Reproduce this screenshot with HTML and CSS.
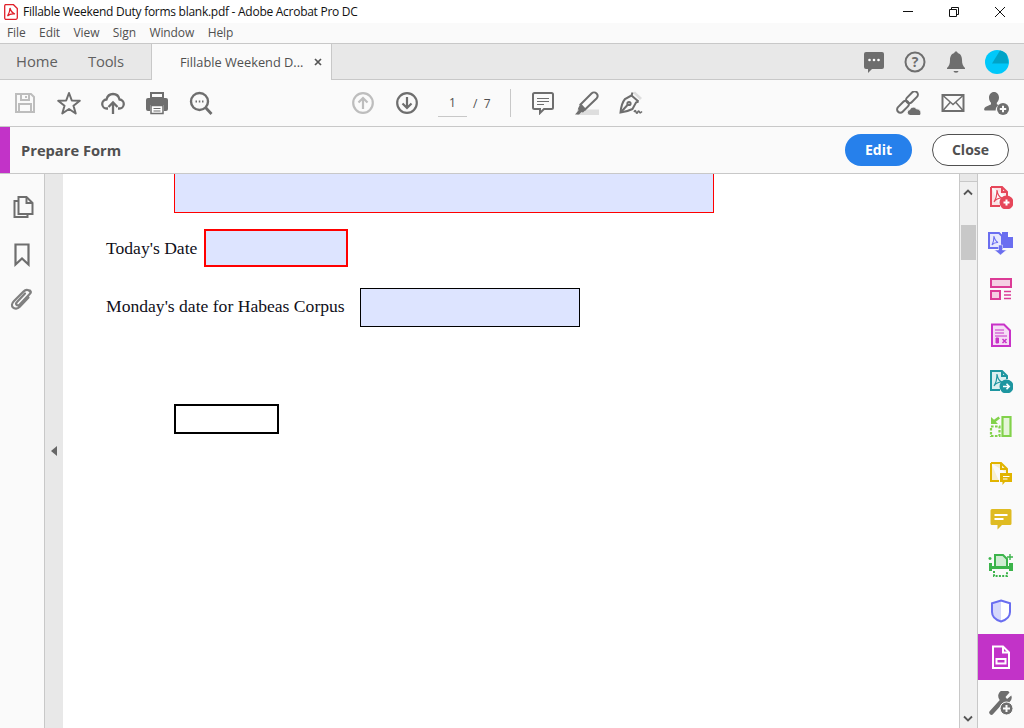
FILE: index.html
```html
<!DOCTYPE html>
<html lang="en">
<head>
<meta charset="utf-8">
<title>Fillable Weekend Duty forms blank.pdf - Adobe Acrobat Pro DC</title>
<link rel="stylesheet" href="styles.css">
</head>
<body>
<div class="app">
  <header class="titlebar">
    <svg class="title-icon" width="14" height="16" viewBox="0 0 14 16"><path d="M1.500.7h8l3.800 3.800v9.300a1.500 1.500 0 0 1-1.500 1.500H1.500A1.500 1.500 0 0 1 0.700 13.800V2.200A1.500 1.500 0 0 1 1.500.7z" fill="#fff" stroke="#e0202a" stroke-width="1.300"/><path d="M6 4c.8 3 2 5 5 6-3-.4-5.500 0-7.500 2 1.500-2.500 2.500-5 2.500-8z" fill="none" stroke="#e0202a" stroke-width="1.200"/></svg>
    <span class="title-text">Fillable Weekend Duty forms blank.pdf - Adobe Acrobat Pro DC</span>
    <div class="win-controls">
      <span class="win-btn"><svg width="12" height="12" viewBox="0 0 12 12"><path d="M1 5.500h10" stroke="#111" stroke-width="1"/></svg></span>
      <span class="win-btn"><svg width="12" height="12" viewBox="0 0 12 12"><path d="M1.500 3.500h7v7h-7zM3.500 3.500v-2h7v7h-2" fill="none" stroke="#111" stroke-width="1"/></svg></span>
      <span class="win-btn"><svg width="12" height="12" viewBox="0 0 12 12"><path d="M1 1l10 10M11 1L1 11" stroke="#111" stroke-width="1"/></svg></span>
    </div>
  </header>

  <nav class="menubar">
    <span>File</span><span>Edit</span><span>View</span><span>Sign</span><span>Window</span><span>Help</span>
  </nav>

  <div class="tabbar">
    <span class="nav-tab nav-home">Home</span>
    <span class="nav-tab nav-tools">Tools</span>
    <div class="doc-tab">
      <span class="doc-tab-name">Fillable Weekend D...</span>
      <svg class="doc-tab-x" width="8" height="8" viewBox="0 0 8 8"><path d="M1 1l6 6M7 1L1 7" stroke="#555" stroke-width="1.700"/></svg>
    </div>
    <div class="tab-actions">
      <span class="tab-action"><svg width="24" height="24" viewBox="0 0 24 24"><path d="M4 2h16a2 2 0 0 1 2 2v13a2 2 0 0 1-2 2H10l-4 4v-4H4a2 2 0 0 1-2-2V4a2 2 0 0 1 2-2z" fill="#6e6e6e"/><circle cx="7.500" cy="10" r="1.300" fill="#fff"/><circle cx="12" cy="10" r="1.300" fill="#fff"/><circle cx="16.500" cy="10" r="1.300" fill="#fff"/></svg></span>
      <span class="tab-action"><svg width="24" height="24" viewBox="0 0 24 24"><circle cx="12" cy="12" r="9.500" fill="none" stroke="#6e6e6e" stroke-width="2"/><text class="help-mark" x="12" y="17" text-anchor="middle">?</text></svg></span>
      <span class="tab-action"><svg width="24" height="24" viewBox="0 0 24 24"><path d="M12 1.500c1 0 1.700.7 1.700 1.600C17 4 18 7 18 10c0 4 1 6 3 8v1H3v-1c2-2 3-4 3-8 0-3 1-6 4.300-6.900 0-.9.700-1.600 1.700-1.600z" fill="#6e6e6e"/><path d="M9.500 21h5a2.500 1.800 0 0 1-5 0z" fill="#6e6e6e"/></svg></span>
      <span class="tab-action"><svg width="24" height="24" viewBox="0 0 24 24"><circle cx="12" cy="12" r="12" fill="#00c8fa"/><path d="M15 .5c3 .5 5.500 2 7 4.500l1.500 8.500H7z" fill="#00a3c7"/></svg></span>
    </div>
  </div>

  <div class="toolbar">
    <span class="tool"><svg width="24" height="24" viewBox="0 0 24 24" fill="none" stroke="#bdbdbd" stroke-width="2"><path d="M3 3h15l3 3v15H3z"/><path d="M8 3v6h8V3M13 5v2M6 21v-8h12v8"/></svg></span>
    <span class="tool"><svg width="24" height="24" viewBox="0 0 24 24" fill="none" stroke="#6e6e6e" stroke-width="2" stroke-linejoin="round"><path d="M12 2l2.800 7.500 8 .3-6.300 4.900 2.200 7.800-6.700-4.500-6.700 4.500 2.200-7.800L1.200 9.800l8-.3z"/></svg></span>
    <span class="tool"><svg width="24" height="24" viewBox="0 0 24 24" fill="none" stroke="#6e6e6e" stroke-width="2.300"><path d="M7 17.500H6a4.500 4.500 0 0 1-.500-9C6.500 4.500 9 3 12 3c3.500 0 5.800 2 6.500 5.500a4.500 4.500 0 0 1-.500 9h-1"/><path d="M12 23V11.500M7.500 16L12 11.500l4.500 4.500"/></svg></span>
    <span class="tool"><svg width="24" height="24" viewBox="0 0 24 24"><path d="M6 2h12v5H6z" fill="none" stroke="#6e6e6e" stroke-width="2"/><path d="M3 7h18a2 2 0 0 1 2 2v9a2 2 0 0 1-2 2h-2v-6H5v6H3a2 2 0 0 1-2-2V9a2 2 0 0 1 2-2z" fill="#6e6e6e"/><path d="M6 14.500h12v8H6z" fill="#fff" stroke="#6e6e6e" stroke-width="1.500"/><path d="M8.500 17.500h7M8.500 20h7" stroke="#6e6e6e" stroke-width="1.200"/></svg></span>
    <span class="tool"><svg width="24" height="24" viewBox="0 0 24 24" fill="none" stroke="#6e6e6e" stroke-width="2.400"><circle cx="10.500" cy="10.500" r="8.500"/><path d="M16.500 16.500l6 6.500" stroke-width="2.800"/><path d="M6.500 10.500h1.500M9.800 10.500h1.500M13 10.500h1.500" stroke-width="1.800"/></svg></span>

    <span class="tool tool-nav"><svg width="24" height="24" viewBox="0 0 24 24" fill="none" stroke="#bdbdbd" stroke-width="2.200"><circle cx="12" cy="12" r="9.800"/><path d="M12 18V7M7.500 11.500L12 7l4.500 4.500"/></svg></span>
    <span class="tool"><svg width="24" height="24" viewBox="0 0 24 24" fill="none" stroke="#6e6e6e" stroke-width="2.200"><circle cx="12" cy="12" r="9.800"/><path d="M12 6v11M7.500 12.500L12 17l4.500-4.500"/></svg></span>
    <span class="page-input">1</span>
    <span class="page-total">/&nbsp;&nbsp;7</span>
    <span class="tool-sep"></span>
    <span class="tool"><svg width="24" height="24" viewBox="0 0 24 24" fill="none" stroke="#6e6e6e" stroke-width="2"><path d="M3.500 2h17a1.500 1.500 0 0 1 1.500 1.500v13a1.500 1.500 0 0 1-1.500 1.500H13l-4 4v-4H3.500A1.500 1.500 0 0 1 2 16.500v-13A1.500 1.500 0 0 1 3.500 2z"/><path d="M6 7.500h12M6 10.500h12M6 13.500h7" stroke-width="1.200"/></svg></span>
    <span class="tool"><svg width="24" height="24" viewBox="0 0 24 24"><path d="M2 18.500h22V24H2z" fill="#dedede"/><path d="M5.500 13.500L16.500 2.500c1.500-1.500 3.500-1.500 5 0s1.300 3.500 0 5L10 18.500z" fill="none" stroke="#6e6e6e" stroke-width="2"/><path d="M5 13.500l5.500 5.500-2.500 2.500-1.500-.5L4 23.500H0l3.500-4-.5-2z" fill="#6e6e6e"/></svg></span>
    <span class="tool"><svg width="24" height="24" viewBox="0 0 24 24" fill="none" stroke="#6e6e6e" stroke-width="2"><path d="M16 .500l7 6.500-2 2-7-7z" fill="#dedede" stroke="none"/><path d="M13.500 1.500l-1 3-6.500 3.500C3.500 11 2 16 1.500 21.500c4.500-.5 9-2 12-3.500l3.500-6.500 2.500-1"/><path d="M12.500 4.500l7 6M2 21l6.500-7"/><circle cx="10" cy="12.500" r="1.600"/><path d="M15 21c1-1.800 1.500-1.800 2 0s1 1.500 1.800 0 1.200-1.300 1.700 0 1 1 2.500-.5" stroke-width="1.600"/></svg></span>
    <div class="tool-right">
      <span class="tool"><svg width="26" height="24" viewBox="0 0 26 24"><g fill="none" stroke="#6e6e6e" stroke-width="2"><rect x="10" y="3" width="14" height="6.500" rx="3.250" transform="rotate(-45 17 6.250)"/><rect x="1" y="12.500" width="14" height="6.500" rx="3.250" transform="rotate(-45 8 15.750)"/></g><path d="M15.500 24.500a3 3 0 0 1-.5-6c.5-2.500 5-3.500 6.300-.7 2.700-.2 4.700 1.800 4.700 4.200 0 1.300-.7 2.500-1.700 2.500z" fill="#6e6e6e" stroke="#fafafa" stroke-width="1"/></svg></span>
      <span class="tool tool-mail"><svg width="24" height="24" viewBox="0 0 24 24" fill="none" stroke="#6e6e6e" stroke-width="2"><path d="M1.500 4h21v16h-21z"/><path d="M2 4.500l10 9 10-9M2 19.500l7.500-8.500M22 19.500L14.500 11" stroke-width="1.500"/></svg></span>
      <span class="tool"><svg width="26" height="24" viewBox="0 0 26 24"><path d="M11 1c3 0 5 2.500 5 5.500 0 2.500-1 4-2.200 5.200v1.600l1.700.700c-2 1.500-3 3.500-2.800 5.500H2c-.800 0-1-1-.700-2 .7-2 5.700-3.200 6.700-4.200v-1.600C6.800 10.500 6 9 6 6.500 6 3.500 8 1 11 1z" fill="#6e6e6e"/><circle cx="20" cy="18" r="6" fill="#6e6e6e"/><path d="M20 14.800v6.400M16.800 18h6.400" stroke="#fafafa" stroke-width="2"/></svg></span>
    </div>
  </div>

  <div class="formbar">
    <span class="formbar-accent"></span>
    <span class="formbar-title">Prepare Form</span>
    <button class="btn btn-edit">Edit</button>
    <button class="btn btn-close">Close</button>
  </div>

  <main class="workspace">
    <aside class="left-rail">
      <svg width="24" height="24" viewBox="0 0 24 24" fill="none" stroke="#6e6e6e" stroke-width="2"><path d="M8.500 2h8l6 6v11h-14z"/><path d="M16.500 2v6h6"/><path d="M8.500 6h-4v16h13v-3"/></svg>
      <svg width="24" height="24" viewBox="0 0 24 24" fill="none" stroke="#6e6e6e" stroke-width="2.200"><path d="M5.500 1.500h13v20L12 15.500l-6.500 6z"/></svg>
      <svg width="24" height="24" viewBox="0 0 24 24" fill="none" stroke="#808080" stroke-width="2.200" stroke-linecap="round"><path d="M20 4.500c-2-2.500-4.500-2-6.500 0L4 14c-2.500 2.500-2.500 5-1 6.500s4.500 1.500 6.500-.5l9-9.500M15 6.500l-8 8.500c-1 1-1 2.300-.3 3s2 .5 3-.5l10-10.500c1.500-1.500 1.500-2.500.3-3.500"/></svg>
    </aside>
    <div class="gutter">
      <span class="collapse-arrow"></span>
    </div>
    <section class="page">
      <div class="field field-big"></div>
      <div class="form-row form-row-today">
        <span class="form-label">Today's Date</span>
        <div class="field field-today"></div>
      </div>
      <div class="form-row form-row-monday">
        <span class="form-label">Monday's date for Habeas Corpus</span>
        <div class="field field-monday"></div>
      </div>
      <div class="field field-empty"></div>
    </section>
    <div class="scrollbar">
      <span class="scroll-cap"></span>
      <svg class="scroll-arrow" width="10" height="7" viewBox="0 0 10 7"><path d="M1 5.500l4-4 4 4" fill="none" stroke="#555" stroke-width="1.800"/></svg>
      <span class="scroll-thumb"></span>
      <svg class="scroll-arrow scroll-arrow-down" width="10" height="7" viewBox="0 0 10 7"><path d="M1 1.500l4 4 4-4" fill="none" stroke="#555" stroke-width="1.800"/></svg>
    </div>
    <aside class="right-rail">
      <span class="rail-item"><svg width="24" height="24" viewBox="0 0 24 24" fill="none" stroke="#e6475a" stroke-width="2"><path d="M2 2h11l5 5v5M11 21H2V2" fill="#fbe3e6"/><path d="M13 2v5h5"/><path d="M8 5c.5 4 2 7 5 8-3 0-6 1-8 4 2-3 3-7 3-12z" stroke-width="1.200"/><circle cx="17.500" cy="17.500" r="6" fill="#e6475a"/><path d="M17.500 14.500v6M14.500 17.500h6" stroke="#fff"/></svg></span>
      <span class="rail-item"><svg width="26" height="24" viewBox="0 0 26 24"><path d="M1 2h10l3 3v12H1z" fill="#e7e8fd" stroke="#6a6ef0" stroke-width="2"/><path d="M14 1h6l5 5v11H14z" fill="#6a6ef0"/><path d="M20 .500v5.500h5.500" fill="#fff"/><path d="M6 5c.4 3 1.500 5 4 6.500-2.500-.2-4.500.5-6 2.500 1.300-2.500 2-5 2-9z" fill="none" stroke="#6a6ef0" stroke-width="1.100"/><path d="M10.500 14h4v5h4l-6 5-6-5h4z" fill="#6a6ef0" stroke="#fafafa" stroke-width=".5"/></svg></span>
      <span class="rail-item"><svg width="24" height="24" viewBox="0 0 24 24" fill="none" stroke="#dc3c96" stroke-width="2"><path d="M2 2h20v8H2z" fill="#f5cfe3"/><path d="M2 14h9v8H2z" fill="#f5cfe3"/><path d="M15 14.500h7M15 18h7M15 21.500h7" stroke-width="1.300"/></svg></span>
      <span class="rail-item"><svg width="24" height="24" viewBox="0 0 24 24" fill="none" stroke="#c832c8" stroke-width="2"><path d="M3 1.500h12l6 6V23H3z" fill="#f5ddf5"/><path d="M6 7h9M6 10h9M6 13h12" stroke-width="1.200"/><path d="M7 15h2.500v5H7z" fill="#c832c8" stroke-width="1"/><path d="M13.500 16l4 4M17.500 16l-4 4" stroke-width="1.500"/></svg></span>
      <span class="rail-item"><svg width="24" height="24" viewBox="0 0 24 24" fill="none" stroke="#1e96a0" stroke-width="2"><path d="M11 21H2V2h11l5 5v3" fill="#dbeff0"/><path d="M13 2v5h5"/><path d="M8 5c.5 4 2 7 5 8-3 0-6 1-8 4 2-3 3-7 3-12z" stroke-width="1.200"/><circle cx="17.500" cy="17.500" r="6" fill="#1e96a0"/><path d="M14 17.500h6M17.500 14.800l2.700 2.700-2.700 2.700" stroke="#fff" stroke-width="1.600"/></svg></span>
      <span class="rail-item"><svg width="24" height="24" viewBox="0 0 24 24" fill="none" stroke="#82d24b" stroke-width="2.200"><path d="M13.500 2h8v19h-8z" fill="#e5f5d8"/><path d="M2 11.500h8.500V21H2z" stroke-dasharray="2.600 1.400"/><path d="M2 2v7h7L6.800 6.800 11 3.500 9.500 1.500 5 4.800z" fill="#82d24b" stroke="none"/></svg></span>
      <span class="rail-item"><svg width="24" height="24" viewBox="0 0 24 24" fill="none" stroke="#e1b400" stroke-width="2"><path d="M2 2h10l6 6v4M10 20H2V2" fill="#f8f0cf"/><path d="M12 2v6h6"/><path d="M11 12h12v9h-7l-2.500 3v-3H11z" fill="#e1b400" stroke="none"/><path d="M14 15.500h6.500M14 18h4.500" stroke="#fff" stroke-width="1.200"/></svg></span>
      <span class="rail-item"><svg width="24" height="24" viewBox="0 0 24 24"><path d="M3 2h18a1.500 1.500 0 0 1 1.500 1.500v13a1.500 1.500 0 0 1-1.500 1.500h-8l-4.500 4.500V18H3a1.500 1.500 0 0 1-1.500-1.500v-13A1.500 1.500 0 0 1 3 2z" fill="#dfbb22"/><path d="M5.500 8h13M5.500 12h9" stroke="#fff" stroke-width="1.800"/></svg></span>
      <span class="rail-item"><svg width="26" height="24" viewBox="0 0 26 24"><path d="M7 13V2h8l4 4v7" fill="#cfecd2" stroke="#3cb44b" stroke-width="2"/><path d="M1 10h3v3h17v-3h4v8h-4v-2H4v2H1z" fill="#3cb44b"/><path d="M6 18v5h13v-5" fill="none" stroke="#3cb44b" stroke-width="2" stroke-dasharray="2 1.300"/><path d="M22 1v6M19 4h6M2 4v3M.5 5.500h3" stroke="#3cb44b" stroke-width="1.400"/></svg></span>
      <span class="rail-item"><svg width="24" height="24" viewBox="0 0 24 24"><path d="M12 1l9 3v9c0 5-4 8.500-9 10z" fill="#fff"/><path d="M12 1L3 4v9c0 5 4 8.500 9 10z" fill="#d6d8fb"/><path d="M12 1.500l9 2.800v8.700c0 5-4 8-9 9.500-5-1.500-9-4.500-9-9.500V4.300z" fill="none" stroke="#6a6ef0" stroke-width="2"/></svg></span>
      <span class="rail-item rail-item-active"><svg width="24" height="24" viewBox="0 0 24 24" fill="none" stroke="#fff" stroke-width="2"><path d="M4 1.500h10l6 6V23H4z"/><path d="M14 1.500v6h6"/><path d="M7.500 14h9v4.500h-9z"/></svg></span>
      <span class="rail-item"><svg width="24" height="24" viewBox="0 0 24 24"><path d="M2.500 21.500L12 11" stroke="#6e6e6e" stroke-width="4.500" stroke-linecap="round"/><path d="M20.500 1.500L16.500 6l1.500 2 4.300-3.500a6 6 0 0 1-9 7l-3-3a6 6 0 0 1 10.200-7z" fill="#6e6e6e"/><circle cx="17.500" cy="17.500" r="6.500" fill="#6e6e6e" stroke="#fafafa" stroke-width="1"/><path d="M17.500 14v7M14 17.500h7" stroke="#fafafa" stroke-width="2"/></svg></span>
    </aside>
  </main>
</div>
</body>
</html>
```

FILE: styles.css
```css
* { box-sizing: border-box; }
html, body { margin: 0; padding: 0; }
body { width: 1024px; height: 728px; overflow: hidden; background: #fff; }
svg { display: block; flex: none; }

.app {
  width: 1024px;
  height: 728px;
  display: flex;
  flex-direction: column;
  font-family: "Open Sans", "Noto Sans", sans-serif;
  color: #505050;
}

.titlebar {
  height: 23px;
  display: flex;
  align-items: center;
  background: #fff;
  padding-left: 4px;
  padding-right: 1px;
  flex: none;
}
.title-text { font-size: 12px; color: #111; margin-left: 5px; letter-spacing: -0.27px; }
.win-controls { margin-left: auto; display: flex; align-items: center; }
.win-btn { width: 46px; height: 23px; display: flex; align-items: center; justify-content: center; }

.menubar {
  height: 21px;
  display: flex;
  align-items: center;
  gap: 13.500px;
  padding: 0 0 1px 7px;
  font-size: 12px;
  letter-spacing: -0.1px;
  color: #505050;
  background: #fafafa;
  border-bottom: 1px solid #c8c8c8;
  flex: none;
}

.tabbar {
  height: 36px;
  display: flex;
  align-items: stretch;
  background: #e8e8e8;
  border-bottom: 1px solid #c8c8c8;
  flex: none;
}
.nav-tab { font-size: 14.800px; color: #606060; line-height: 35px; }
.nav-home { margin-left: 16px; width: 72px; }
.nav-tools { width: 63px; letter-spacing: -0.2px; }
.doc-tab {
  width: 181px;
  height: 36px;
  display: flex;
  align-items: center;
  padding-left: 28px;
  background: #fafafa;
  border-left: 1px solid #c8c8c8;
  border-right: 1px solid #c8c8c8;
}
.doc-tab-name { font-size: 12.800px; color: #505050; white-space: nowrap; }
.doc-tab-x { margin-left: 11px; }
.tab-actions { margin-left: auto; display: flex; align-items: center; padding-right: 7px; }
.tab-action { width: 41px; display: flex; justify-content: center; }
.help-mark { font-family: "Open Sans", sans-serif; font-size: 14px; font-weight: 700; fill: #6e6e6e; }

.toolbar {
  height: 47px;
  display: flex;
  align-items: center;
  padding: 0 6px 0 3px;
  background: #fafafa;
  border-bottom: 1px solid #c8c8c8;
  flex: none;
}
.tool { width: 44px; display: flex; justify-content: center; }
.tool-nav { margin-left: 118px; }
.tool-mail svg { margin-left: 2px; }
.page-input {
  width: 29px;
  height: 25px;
  margin-left: 9px;
  font-size: 12px;
  line-height: 22px;
  text-align: center;
  color: #505050;
  border-bottom: 1px solid #c8c8c8;
  position: relative;
  top: 1px;
}
.page-total { font-size: 12px; color: #505050; margin-left: 6px; width: 37px; }
.tool-sep { width: 1px; height: 28px; background: #c8c8c8; margin-right: 10px; }
.tool-right { margin-left: auto; display: flex; }

.formbar {
  height: 47px;
  display: flex;
  align-items: center;
  background: #fafafa;
  border-bottom: 1px solid #c8c8c8;
  flex: none;
}
.formbar-accent { width: 10px; height: 46px; background: #c233c8; }
.formbar-title { margin-left: 11px; font-size: 14.700px; font-weight: 700; color: #505050; }
.btn {
  height: 32px;
  border-radius: 16px;
  font-family: "Open Sans", sans-serif;
  font-size: 14px;
  font-weight: 700;
  padding: 0 0 2px;
}
.btn-edit { margin-left: auto; width: 67px; background: #2680eb; color: #fff; border: none; }
.btn-close { margin: 0 15px 0 20px; width: 77px; background: #fff; color: #505050; border: 1.500px solid #505050; }

.workspace { flex: 1; display: flex; min-height: 0; }

.left-rail {
  width: 45px;
  background: #fafafa;
  border-right: 1px solid #c8c8c8;
  padding: 21px 0 0 10px;
  display: flex;
  flex-direction: column;
  gap: 24px;
  flex: none;
}
.left-rail svg:last-child { margin-top: -4px; }
.gutter {
  width: 18px;
  background: #e8e8e8;
  display: flex;
  align-items: center;
  justify-content: center;
  padding-bottom: 1px;
  flex: none;
}
.collapse-arrow {
  width: 0;
  height: 0;
  border-top: 5px solid transparent;
  border-bottom: 5px solid transparent;
  border-right: 6px solid #666;
  margin-right: 1px;
}

.page {
  flex: 1;
  background: #fff;
  font-family: "Liberation Serif", serif;
  font-size: 17.600px;
  color: #10101a;
  padding-left: 43px;
}
.field { background: #dde4ff; }
.field-big { width: 540px; height: 39px; margin-left: 68px; border: 1px solid #f00; border-top: none; }
.form-row { display: flex; align-items: center; }
.form-row-today { margin-top: 16px; gap: 7px; }
.form-row-monday { margin-top: 21px; gap: 15px; }
.form-row-monday .form-label { margin-top: -2px; }
.field-today { width: 144px; height: 38px; border: 2px solid #f00; }
.field-monday { width: 220px; height: 39px; border: 1px solid #000; }
.field-empty { width: 105px; height: 30px; margin: 77px 0 0 68px; background: #fff; border: 2px solid #000; }

.scrollbar {
  width: 19px;
  background: #f0f0f0;
  border-left: 1px solid #c8c8c8;
  border-right: 1px solid #c8c8c8;
  display: flex;
  flex-direction: column;
  align-items: center;
  flex: none;
}
.scroll-cap { width: 100%; height: 8px; background: #e8e8e8; border-bottom: 1px solid #c8c8c8; flex: none; }
.scroll-arrow { margin-top: 7px; margin-right: 1px; }
.scroll-thumb { width: 15px; height: 35px; margin-top: 29px; background: #c8c8c8; }
.scroll-arrow-down { margin-top: auto; margin-bottom: 6px; }

.right-rail { width: 46px; background: #fafafa; display: flex; flex-direction: column; flex: none; }
.rail-item { height: 46px; display: flex; align-items: center; justify-content: center; flex: none; }
.rail-item-active { background: #c233c8; }
```
